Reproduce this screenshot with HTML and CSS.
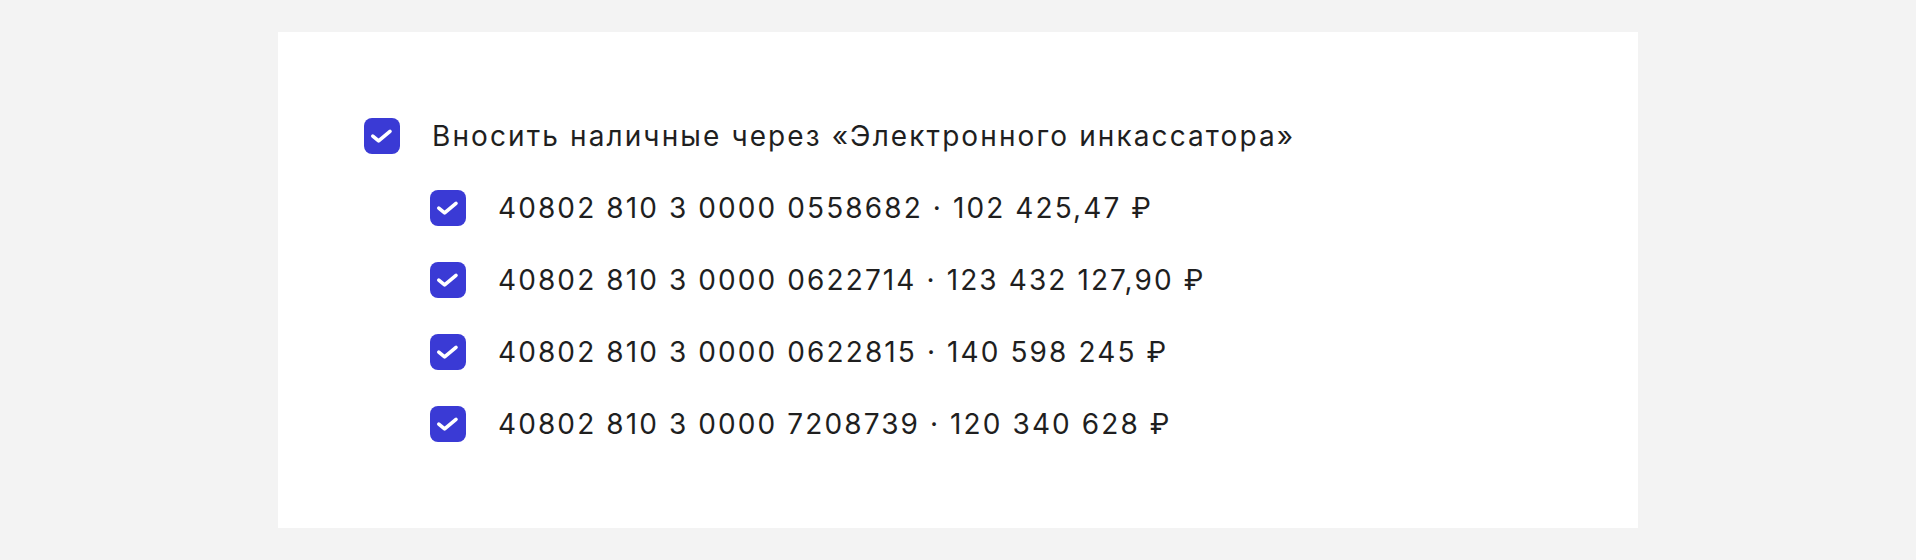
FILE: index.html
```html
<!DOCTYPE html>
<html lang="ru">
<head>
<meta charset="utf-8">
<link rel="stylesheet" href="styles.css">
</head>
<body>
<div class="card">
  <ul class="list">
    <li class="row">
      <span class="box"><svg viewBox="0 0 36 36" width="36" height="36"><path d="M8.8 18.2 L14.6 22.9 L26 13.4" fill="none" stroke="#fff" stroke-width="3.6" stroke-linecap="round" stroke-linejoin="round"/></svg></span>
      <span class="label">Вносить наличные через «Электронного инкассатора»</span>
    </li>
    <li class="row sub">
      <span class="box"><svg viewBox="0 0 36 36" width="36" height="36"><path d="M8.8 18.2 L14.6 22.9 L26 13.4" fill="none" stroke="#fff" stroke-width="3.6" stroke-linecap="round" stroke-linejoin="round"/></svg></span>
      <span class="label">40802 810 3 0000 0558682 · 102 425,47 ₽</span>
    </li>
    <li class="row sub">
      <span class="box"><svg viewBox="0 0 36 36" width="36" height="36"><path d="M8.8 18.2 L14.6 22.9 L26 13.4" fill="none" stroke="#fff" stroke-width="3.6" stroke-linecap="round" stroke-linejoin="round"/></svg></span>
      <span class="label">40802 810 3 0000 0622714 · 123 432 127,90 ₽</span>
    </li>
    <li class="row sub">
      <span class="box"><svg viewBox="0 0 36 36" width="36" height="36"><path d="M8.8 18.2 L14.6 22.9 L26 13.4" fill="none" stroke="#fff" stroke-width="3.6" stroke-linecap="round" stroke-linejoin="round"/></svg></span>
      <span class="label">40802 810 3 0000 0622815 · 140 598 245 ₽</span>
    </li>
    <li class="row sub">
      <span class="box"><svg viewBox="0 0 36 36" width="36" height="36"><path d="M8.8 18.2 L14.6 22.9 L26 13.4" fill="none" stroke="#fff" stroke-width="3.6" stroke-linecap="round" stroke-linejoin="round"/></svg></span>
      <span class="label">40802 810 3 0000 7208739 · 120 340 628 ₽</span>
    </li>
  </ul>
</div>
</body>
</html>
```
FILE: styles.css
```css
html, body {
  margin: 0;
  padding: 0;
  background: #f3f3f3;
}
body {
  padding: 32px 0;
  font-family: Inter, "Noto Sans", sans-serif;
  color: #1f1f1f;
}
.card {
  width: 1360px;
  height: 496px;
  box-sizing: border-box;
  margin: 0 auto;
  background: #fff;
  padding: 86px 86px;
}
.list {
  list-style: none;
  margin: 0;
  padding: 0;
  display: flex;
  flex-direction: column;
  gap: 36px;
}
.row {
  display: flex;
  align-items: center;
  gap: 32px;
  height: 36px;
}
.row.sub {
  padding-left: 66px;
}
.box {
  flex: none;
  width: 36px;
  height: 36px;
  border-radius: 8px;
  background: #3a3ad5;
  display: flex;
}
.label {
  font-size: 28px;
  line-height: 36px;
  letter-spacing: 2.1px;
}
```
